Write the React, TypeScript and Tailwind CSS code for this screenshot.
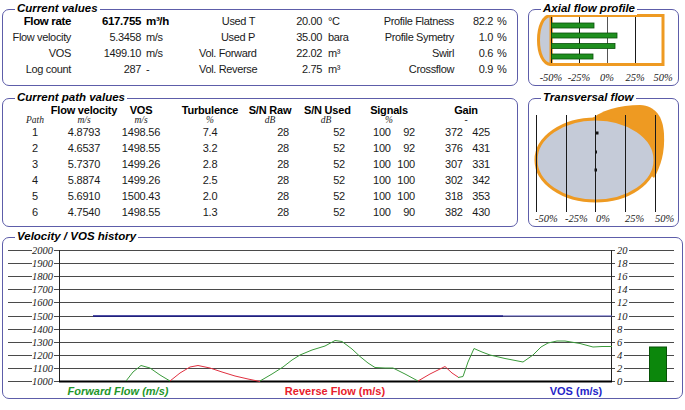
import React from "react";

function Panel({ title, className, children }: { title: string; className: string; children?: React.ReactNode }) {
  return (
    <div className={`relative border border-[#5d5da9] rounded-[7px] ${className}`}>
      <div className="absolute left-[12px] top-[-9px] bg-white px-[2px] text-[11.5px] leading-[14px] font-bold italic text-black whitespace-nowrap">
        {title}
      </div>
      {children}
    </div>
  );
}

const cvRows = [
  ["Flow rate", "617.755", "m³/h", "Used T", "20.00", "°C", "Profile Flatness", "82.2", "%"],
  ["Flow velocity", "5.3458", "m/s", "Used P", "35.00", "bara", "Profile Symetry", "1.0", "%"],
  ["VOS", "1499.10", "m/s", "Vol. Forward", "22.02", "m³", "Swirl", "0.6", "%"],
  ["Log count", "287", "-", "Vol. Reverse", "2.75", "m³", "Crossflow", "0.9", "%"],
];

function CurrentValues() {
  return (
    <div className="pt-[3px] grid grid-cols-[68px_70px_58px_56px_67px_60px_72px_39px_1fr] text-[11px] leading-[16px] tracking-[-0.35px]">
      {cvRows.map((r, i) => {
        const b = i === 0 ? "font-bold text-[11.5px] text-black" : "";
        return (
          <React.Fragment key={i}>
            <div className={`text-right whitespace-nowrap ${b}`}>{r[0]}</div>
            <div className={`text-right whitespace-nowrap ${b}`}>{r[1]}</div>
            <div className={`pl-[5px] whitespace-nowrap ${b}`}>{r[2]}</div>
            <div className="text-right whitespace-nowrap">{r[3]}</div>
            <div className="text-right whitespace-nowrap">{r[4]}</div>
            <div className="pl-[6px] whitespace-nowrap">{r[5]}</div>
            <div className="text-right whitespace-nowrap">{r[6]}</div>
            <div className="text-right whitespace-nowrap">{r[7]}</div>
            <div className="pl-[4px] whitespace-nowrap">{r[8]}</div>
          </React.Fragment>
        );
      })}
    </div>
  );
}

const pathRows = [
  ["1", "4.8793", "1498.56", "7.4", "28", "52", "100", "92", "372", "425"],
  ["2", "4.6537", "1498.55", "3.2", "28", "52", "100", "92", "376", "431"],
  ["3", "5.7370", "1499.26", "2.8", "28", "52", "100", "100", "307", "331"],
  ["4", "5.8874", "1499.26", "2.5", "28", "52", "100", "100", "302", "342"],
  ["5", "5.6910", "1500.43", "2.0", "28", "52", "100", "100", "318", "353"],
  ["6", "4.7540", "1498.55", "1.3", "28", "52", "100", "90", "382", "430"],
];

function PathValues() {
  return (
    <div className="pl-[17px] pt-[6px]">
      <div className="flex h-[11px] leading-[11px] text-[11px] font-bold text-black tracking-[-0.2px] whitespace-nowrap">
        <div className="w-[30px]"></div>
        <div className="w-[68px] text-center">Flow velocity</div>
        <div className="w-[46px] text-center">VOS</div>
        <div className="w-[60px] ml-[16px] text-center">Turbulence</div>
        <div className="w-[44px] ml-[8px] text-center">S/N Raw</div>
        <div className="w-[44px] ml-[12px] text-center">S/N Used</div>
        <div className="w-[58px] ml-[12px] text-center">Signals</div>
        <div className="w-[52px] ml-[22px] text-center">Gain</div>
      </div>
      <div className="flex h-[8px] leading-[8px] text-[9.5px] italic font-['Liberation_Serif','Times_New_Roman',serif] whitespace-nowrap">
        <div className="w-[30px] text-center">Path</div>
        <div className="w-[68px] text-center">m/s</div>
        <div className="w-[46px] text-center">m/s</div>
        <div className="w-[60px] ml-[16px] text-center">%</div>
        <div className="w-[44px] ml-[8px] text-center">dB</div>
        <div className="w-[44px] ml-[12px] text-center">dB</div>
        <div className="w-[58px] ml-[12px] text-center">%</div>
        <div className="w-[52px] ml-[22px] text-center">-</div>
      </div>
      {pathRows.map((r) => (
        <div key={r[0]} className="flex h-[16px] leading-[16px] text-[11px] tracking-[-0.2px] whitespace-nowrap">
          <div className="w-[30px] text-center">{r[0]}</div>
          <div className="w-[68px] text-center">{r[1]}</div>
          <div className="w-[46px] text-center">{r[2]}</div>
          <div className="w-[60px] ml-[16px] text-center">{r[3]}</div>
          <div className="w-[44px] ml-[8px] text-right pr-[3px]">{r[4]}</div>
          <div className="w-[44px] ml-[12px] text-right pr-[3px]">{r[5]}</div>
          <div className="w-[58px] ml-[12px] flex justify-between pl-[13px] pr-[3px]">
            <span>{r[6]}</span>
            <span>{r[7]}</span>
          </div>
          <div className="w-[52px] ml-[22px] flex justify-between pl-[5px] pr-[2px]">
            <span>{r[8]}</span>
            <span>{r[9]}</span>
          </div>
        </div>
      ))}
    </div>
  );
}

const ORANGE = "#ee9a22";
const PIPE = "#c5cbd8";
const serif = "'Liberation Serif','Times New Roman',serif";

function Axial() {
  const lines = [551.5, 579.5, 607.5, 635.5];
  const labels: [number, string][] = [
    [551, "-50%"],
    [579, "-25%"],
    [607, "0%"],
    [635, "25%"],
    [663, "50%"],
  ];
  const bars: [number, number][] = [
    [23, 594],
    [33, 617],
    [43.5, 615],
    [54, 593],
  ];
  return (
    <svg width="149" height="75" viewBox="529 10 149 75" className="block">
      <rect x="551" y="15.5" width="112" height="49" fill="white" stroke={ORANGE} strokeWidth="3" />
      <path d="M551,15.5 C543,15.5 538.5,27 538.5,40 C538.5,53 543,64.5 551,64.5 Z" fill={PIPE} stroke={ORANGE} strokeWidth="3" />
      {lines.map((x, i) => (
        <line key={x} x1={x} y1="17" x2={x} y2="63" stroke={i === 2 ? "#555" : "#1a1a1a"} strokeWidth="1" />
      ))}
      {bars.map(([y, x2]) => (
        <rect key={y} x="551.5" y={y} width={x2 - 551.5} height="5" fill="#1f8f1f" stroke="#0b500b" strokeWidth="0.8" />
      ))}
      {labels.map(([x, t]) => (
        <text key={t} x={x} y="80.5" textAnchor="middle" fontFamily={serif} fontStyle="italic" fontSize="10.5" fill="#222">
          {t}
        </text>
      ))}
    </svg>
  );
}

function Transversal() {
  const lines = [536.5, 566.5, 595.5, 625.5, 655.5];
  const labels: [number, string][] = [
    [535, "-50%"],
    [565, "-25%"],
    [596, "0%"],
    [625, "25%"],
    [655, "50%"],
  ];
  return (
    <svg width="149" height="127" viewBox="529 99 149 127" className="block">
      <path d="M588,122 C600,110 620,105 640,105 C656,106 663,117 664,134 C665,152 661,166 654,178 Z" fill={ORANGE} />
      <ellipse cx="595.5" cy="160" rx="59.5" ry="41" fill={PIPE} stroke={ORANGE} strokeWidth="3" />
      {lines.map((x) => (
        <line key={x} x1={x} y1="115" x2={x} y2="212" stroke="#1a1a1a" strokeWidth="1" />
      ))}
      <rect x="596" y="131.5" width="2.5" height="3" fill="#111" />
      <rect x="595.5" y="150.5" width="1.5" height="3" fill="#111" />
      <rect x="594.5" y="168.5" width="2.5" height="3" fill="#111" />
      {labels.map(([x, t]) => (
        <text key={t} x={x} y="221.5" textAnchor="start" fontFamily={serif} fontStyle="italic" fontSize="10.5" fill="#222">
          {t}
        </text>
      ))}
    </svg>
  );
}

const green1 = "126,381 133,372 141,365.5 150,368 160,375 170,381";
const red1 = "170,381 180,373 190,367 198,365.5 210,368 222,372 235,376 248,379 260,381.5";
const green2 =
  "260,381 272,374 283,367 292,360 300,355 312,350 325,346 335,340.5 342,341.5 352,349 360,356.5 368,363 375,367.5 385,368 393,368 405,374 418,381";
const red2 = "418,381 430,374 445,366.5 452,373 458,377";
const green3 =
  "458,377.5 463,376.5 468,362 474,348.5 482,352 490,355 505,358.5 523,362 533,355 541,347 548,343 557,341 565,341 580,343.5 593,347 602,346.5 612,346.5";

function History() {
  const ys = Array.from({ length: 11 }, (_, i) => 250 + i * 13.1);
  return (
    <div>
      <svg width="679" height="148" viewBox="3 238 679 148" className="block">
        {ys.map((y, i) => {
          const yy = Math.round(y) + 0.5;
          const rv = 20 - i * 2;
          const rEnd = rv >= 10 ? 629 : 624;
          return (
            <g key={i}>
              <line x1="8" y1={yy} x2="32" y2={yy} stroke="#4a4a4a" />
              <line x1="54" y1={yy} x2="615" y2={yy} stroke="#4a4a4a" />
              <line x1={rEnd} y1={yy} x2="674" y2={yy} stroke="#4a4a4a" />
              <text x="53" y={yy + 3.5} textAnchor="end" fontFamily={serif} fontStyle="italic" fontSize="10.5" fill="#222">
                {2000 - i * 100}
              </text>
              <text x="617" y={yy + 3.5} textAnchor="start" fontFamily={serif} fontStyle="italic" fontSize="10.5" fill="#222">
                {rv}
              </text>
            </g>
          );
        })}
        <line x1="59.5" y1="250" x2="59.5" y2="382" stroke="#222" />
        <line x1="611.5" y1="250" x2="611.5" y2="382" stroke="#222" />
        <line x1="59" y1="381.5" x2="612" y2="381.5" stroke="#000" strokeWidth="2" />
        <line x1="93" y1="316" x2="503" y2="316" stroke="#14148a" strokeWidth="1.6" />
        <line x1="503" y1="316" x2="612" y2="316" stroke="#4848b4" strokeWidth="1.2" />
        <polyline points={green1} fill="none" stroke="#3a9a3a" strokeWidth="1" strokeLinejoin="round" />
        <polyline points={red1} fill="none" stroke="#e03040" strokeWidth="1" strokeLinejoin="round" />
        <polyline points={green2} fill="none" stroke="#3a9a3a" strokeWidth="1" strokeLinejoin="round" />
        <polyline points={red2} fill="none" stroke="#e03040" strokeWidth="1" strokeLinejoin="round" />
        <polyline points={green3} fill="none" stroke="#3a9a3a" strokeWidth="1" strokeLinejoin="round" />
        <rect x="649.5" y="347" width="17" height="34.5" fill="#0c870c" stroke="#075207" strokeWidth="1" />
      </svg>
      <div className="flex pl-[15px] h-[11px] leading-[11px] text-[11px] font-bold whitespace-nowrap">
        <div className="w-[200px] text-center italic text-[#23962a]">Forward Flow (m/s)</div>
        <div className="w-[200px] ml-[17px] text-center text-[#e8202c]">Reverse Flow (m/s)</div>
        <div className="w-[200px] ml-[41px] text-center text-[#2424c8]">VOS (m/s)</div>
      </div>
    </div>
  );
}

export default function App() {
  return (
    <div className="w-[685px] h-[410px] bg-white overflow-hidden pt-[9px] pl-[2px] font-['Liberation_Sans',Arial,sans-serif] text-[#1a1a1a]">
      <div className="flex">
        <Panel title="Current values" className="w-[516px] h-[77px]">
          <CurrentValues />
        </Panel>
        <Panel title="Axial flow profile" className="w-[151px] h-[77px] ml-[10px]">
          <Axial />
        </Panel>
      </div>
      <div className="flex mt-[12px]">
        <Panel title="Current path values" className="w-[516px] h-[129px]">
          <PathValues />
        </Panel>
        <Panel title="Transversal flow" className="w-[151px] h-[129px] ml-[10px]">
          <Transversal />
        </Panel>
      </div>
      <Panel title="Velocity / VOS history" className="w-[681px] h-[162px] mt-[10px]">
        <History />
      </Panel>
    </div>
  );
}
